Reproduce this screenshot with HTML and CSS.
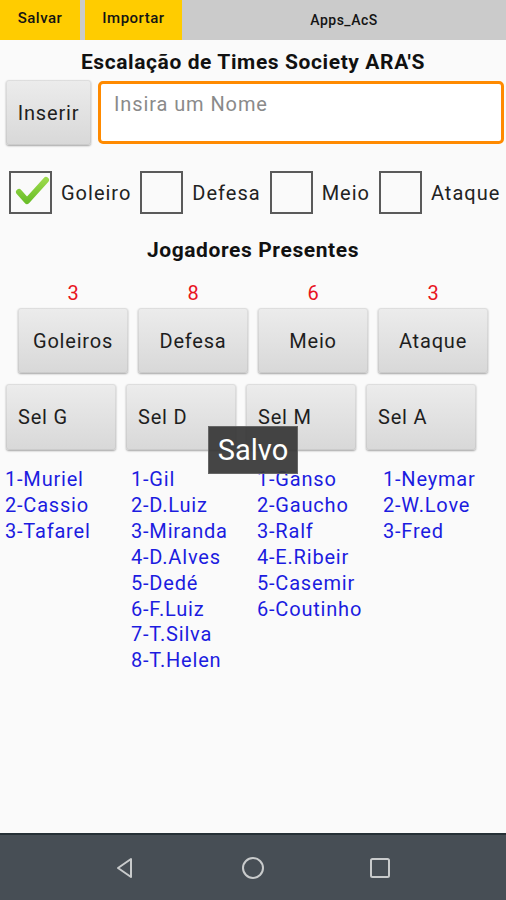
FILE: index.html
```html
<!DOCTYPE html>
<html lang="pt">
<head>
<meta charset="utf-8">
<title>Apps_AcS</title>
<link rel="stylesheet" href="styles.css">
</head>
<body>
<div class="screen">
  <div class="topbar">
    <div class="tab tab-salvar">Salvar</div>
    <div class="tab tab-importar">Importar</div>
    <div class="apptitle">Apps_AcS</div>
  </div>
  <main class="main">
    <h1 class="title">Escalação de Times Society ARA'S</h1>
    <div class="insert-row">
      <div class="btn btn-inserir">Inserir</div>
      <div class="name-input">Insira um Nome</div>
    </div>
    <div class="check-row">
      <div class="check-item">
        <span class="box">
          <svg viewBox="0 0 43 43" width="43" height="43"><defs><linearGradient id="g" x1="0" y1="0" x2="0" y2="1"><stop offset="0" stop-color="#9ad94a"/><stop offset="1" stop-color="#6cbf2a"/></linearGradient></defs><path d="M10 21 L18 30 L37 9" fill="none" stroke="url(#g)" stroke-width="6" stroke-linecap="round" stroke-linejoin="round"/></svg>
        </span>
        <span class="check-label">Goleiro</span>
      </div>
      <div class="check-item"><span class="box"></span><span class="check-label">Defesa</span></div>
      <div class="check-item"><span class="box"></span><span class="check-label">Meio</span></div>
      <div class="check-item"><span class="box"></span><span class="check-label">Ataque</span></div>
    </div>
    <h2 class="subtitle">Jogadores Presentes</h2>
    <div class="count-grid">
      <div class="count">3</div>
      <div class="count">8</div>
      <div class="count">6</div>
      <div class="count">3</div>
      <div class="btn btn-pos">Goleiros</div>
      <div class="btn btn-pos">Defesa</div>
      <div class="btn btn-pos">Meio</div>
      <div class="btn btn-pos">Ataque</div>
    </div>
    <div class="sel-grid">
      <div class="btn btn-sel">Sel G</div>
      <div class="btn btn-sel">Sel D</div>
      <div class="btn btn-sel">Sel M</div>
      <div class="btn btn-sel">Sel A</div>
    </div>
    <div class="lists">
      <ul class="list">
        <li>1-Muriel</li><li>2-Cassio</li><li>3-Tafarel</li>
      </ul>
      <ul class="list">
        <li>1-Gil</li><li>2-D.Luiz</li><li>3-Miranda</li><li>4-D.Alves</li><li>5-Dedé</li><li>6-F.Luiz</li><li>7-T.Silva</li><li>8-T.Helen</li>
      </ul>
      <ul class="list">
        <li>1-Ganso</li><li>2-Gaucho</li><li>3-Ralf</li><li>4-E.Ribeir</li><li>5-Casemir</li><li>6-Coutinho</li>
      </ul>
      <ul class="list">
        <li>1-Neymar</li><li>2-W.Love</li><li>3-Fred</li>
      </ul>
    </div>
    <div class="toast">Salvo</div>
  </main>
  <nav class="navbar">
    <svg class="nav-icon" viewBox="0 0 24 24" width="24" height="24"><path d="M17 3 L17 21 L4 12 Z" fill="none" stroke="#c9cbcc" stroke-width="2" stroke-linejoin="round"/></svg>
    <svg class="nav-icon" viewBox="0 0 24 24" width="24" height="24"><circle cx="12" cy="12" r="10" fill="none" stroke="#c9cbcc" stroke-width="2"/></svg>
    <svg class="nav-icon" viewBox="0 0 24 24" width="24" height="24"><rect x="3" y="3" width="18" height="18" rx="1.5" fill="none" stroke="#c9cbcc" stroke-width="2"/></svg>
  </nav>
</div>
</body>
</html>
```

FILE: styles.css
```css
* { box-sizing: border-box; }
html, body { margin: 0; padding: 0; }
body {
  font-family: Roboto, "Noto Sans", "Liberation Sans", sans-serif;
  background: #fafafa;
  color: #212121;
}
.screen {
  width: 506px;
  height: 900px;
  display: flex;
  flex-direction: column;
  overflow: hidden;
}
.topbar {
  height: 40px;
  display: flex;
  background: #cbcbcb;
  font-weight: 500;
  font-size: 15px;
  letter-spacing: 0.5px;
  color: #141414;
}
.tab {
  background: #ffcc00;
  display: flex;
  align-items: center;
  justify-content: center;
  padding-bottom: 4px;
}
.tab-salvar { width: 80px; margin-right: 5px; }
.tab-importar { width: 97px; }
.apptitle {
  flex: 1;
  display: flex;
  align-items: center;
  justify-content: center;
  font-size: 14px;
  padding-bottom: 1px;
}
.main {
  flex: 1;
  position: relative;
}
.title {
  margin: 0;
  padding-top: 4px;
  line-height: 36px;
  font-size: 21px;
  letter-spacing: 0.6px;
  font-weight: 700;
  text-align: center;
  color: #111;
}
.btn {
  background: linear-gradient(#ececec, #d8d8d8);
  border-radius: 3px;
  box-shadow: 0 1px 2px rgba(0,0,0,0.35), inset 0 0 0 1px rgba(0,0,0,0.06);
  color: #1e1e1e;
  font-size: 20px;
  letter-spacing: 0.8px;
  display: flex;
  align-items: center;
  justify-content: center;
}
.insert-row {
  display: flex;
  height: 65px;
  padding-left: 6px;
  gap: 7px;
}
.btn-inserir { width: 85px; height: 65px; }
.name-input {
  margin-top: 1px;
  width: 406px;
  height: 63px;
  border: 3px solid #ff8a00;
  border-radius: 5px;
  background: #fff;
  color: #8a8a8a;
  font-size: 20px;
  letter-spacing: 0.9px;
  padding: 8px 0 0 13px;
}
.check-row {
  margin-top: 26px;
  display: flex;
  padding-left: 9px;
  height: 43px;
}
.check-item {
  display: flex;
  align-items: center;
}
.box {
  width: 43px;
  height: 43px;
  border: 2px solid #5a5a5a;
  display: block;
  position: relative;
}
.box svg { position: absolute; left: -2px; top: -2px; }
.check-label {
  font-size: 20px;
  letter-spacing: 1px;
  color: #222;
  margin-left: 9px;
  margin-right: 9px;
}
.subtitle {
  margin: 0;
  margin-top: 23px;
  line-height: 26px;
  font-size: 21px;
  letter-spacing: 0.6px;
  font-weight: 700;
  text-align: center;
  color: #111;
}
.count-grid {
  margin-top: 20px;
  padding-left: 18px;
  display: grid;
  grid-template-columns: repeat(4, 110px);
  column-gap: 10px;
  row-gap: 5px;
}
.count {
  text-align: center;
  color: #e8141e;
  font-size: 20px;
  line-height: 20px;
}
.btn-pos { height: 65px; }
.sel-grid {
  margin-top: 11px;
  padding-left: 6px;
  display: grid;
  grid-template-columns: repeat(4, 110px);
  column-gap: 10px;
}
.btn-sel {
  height: 66px;
  justify-content: flex-start;
  padding-left: 12px;
}
.lists {
  margin-top: 17px;
  display: grid;
  grid-template-columns: repeat(4, 126px);
  padding-left: 5px;
}
.list {
  list-style: none;
  margin: 0;
  padding: 0;
  font-size: 20px;
  letter-spacing: 0.8px;
  line-height: 25.9px;
  color: #1c1ce0;
}
.toast {
  position: absolute;
  left: 208px;
  top: 386px;
  width: 90px;
  height: 48px;
  background: rgba(55,55,55,0.93);
  border: 1px solid #666;
  color: #fff;
  font-size: 29px;
  display: flex;
  align-items: center;
  justify-content: center;
}
.navbar {
  height: 67px;
  background: #474e55;
  border-top: 2px solid #263036;
  display: flex;
  align-items: center;
  justify-content: center;
  gap: 103px;
}
```
